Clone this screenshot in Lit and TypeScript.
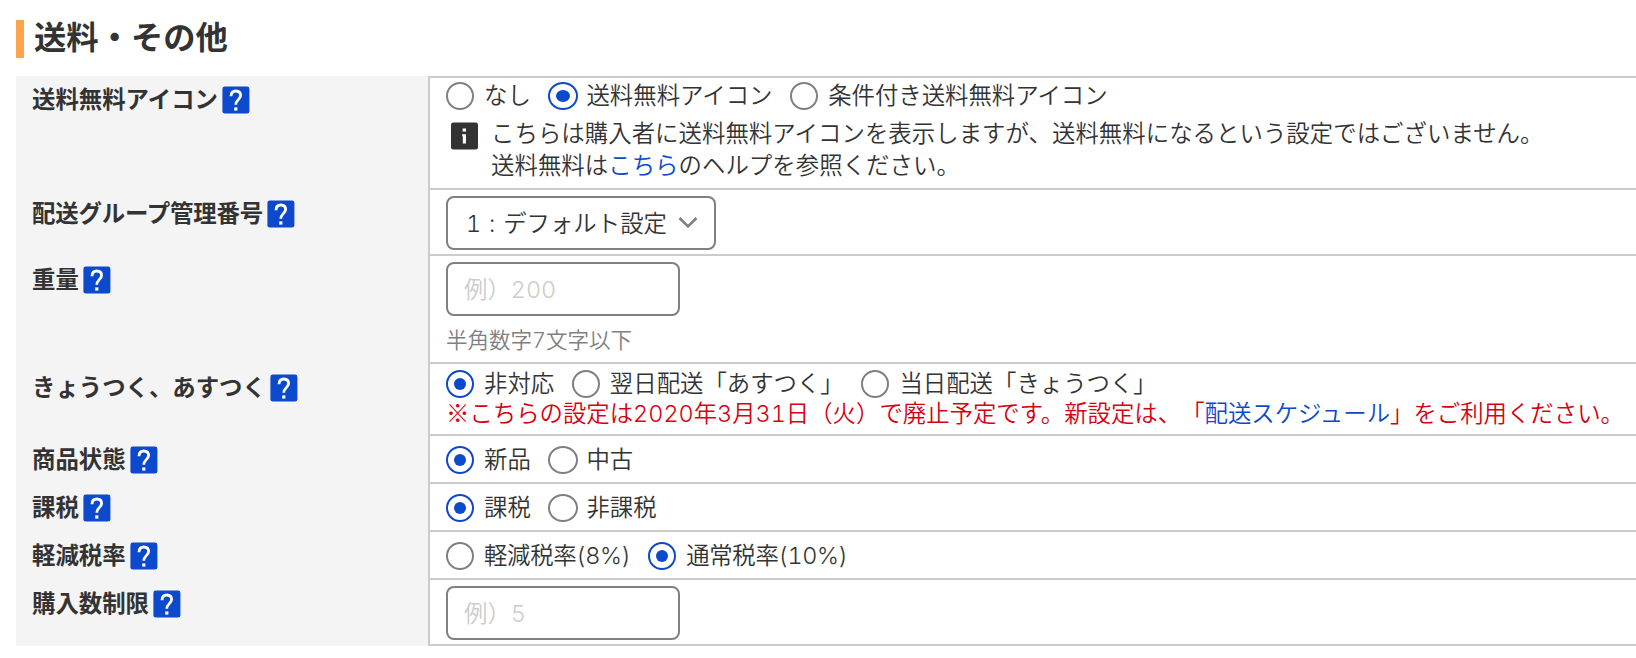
import { LitElement, css, html, nothing } from 'lit';
import { customElement, property } from 'lit/decorators.js';
import { classMap } from 'lit/directives/class-map.js';

interface Option {
  label: string;
  checked?: boolean;
  wide?: boolean;
}

@customElement('help-icon')
export class HelpIcon extends LitElement {
  static styles = css`
    :host {
      display: block;
      width: 28px;
      height: 28px;
    }

    svg {
      display: block;
    }
  `;

  render() {
    return html`
      <svg width="28" height="28" viewBox="0 0 28 28" role="img" aria-label="ヘルプ">
        <rect x="0.4" y="0.6" width="27" height="27" rx="2.4" fill="#0d49cc" />
        <path
          d="M9 10.2C9 6.8 10.9 5 13.8 5S18.6 6.8 18.6 9.6C18.6 13.2 13.8 13.8 13.8 18.8"
          fill="none"
          stroke="#fff"
          stroke-width="2.8"
        />
        <rect x="12.2" y="21.4" width="3.2" height="3.2" fill="#fff" />
      </svg>
    `;
  }
}

@customElement('radio-group')
export class RadioGroup extends LitElement {
  static styles = css`
    :host {
      display: flex;
      gap: 17.7px;
      line-height: 36px;
      white-space: nowrap;
    }

    .option {
      display: flex;
      align-items: center;
      gap: 10px;
    }

    .option.wide {
      gap: 8px;
    }

    .mark {
      box-sizing: border-box;
      display: flex;
      align-items: center;
      justify-content: center;
      width: 28px;
      height: 28px;
      border: 2px solid #808080;
      border-radius: 50%;
      background: #fff;
    }

    .wide .mark {
      width: 30px;
    }

    .mark.checked {
      border-color: #0d49cc;
    }

    .mark.checked::after {
      content: '';
      width: 12px;
      height: 12px;
      border-radius: 50%;
      background: #0d49cc;
    }

    .wide .mark.checked::after {
      width: 14px;
    }
  `;

  @property({ attribute: false }) options: Option[] = [];

  render() {
    return this.options.map(
      (option) => html`
        <label class=${classMap({ option: true, wide: !!option.wide })}>
          <span class=${classMap({ mark: true, checked: !!option.checked })}></span>
          <span>${option.label}</span>
        </label>
      `
    );
  }
}

@customElement('form-row')
export class FormRow extends LitElement {
  static styles = css`
    :host {
      display: flex;
      box-sizing: border-box;
    }

    .head {
      display: flex;
      align-items: flex-start;
      gap: 4px;
      box-sizing: border-box;
      width: 412px;
      flex: none;
      padding: 12px 0 0 16px;
      background: #f4f4f4;
      font-weight: 700;
      line-height: 28px;
      white-space: nowrap;
    }

    :host(.first) .head {
      padding-top: 10px;
    }

    :host(.dense) .head {
      letter-spacing: -0.15px;
    }

    .body {
      flex: 1;
      box-sizing: border-box;
      border-left: 2px solid #ccc;
      border-top: 2px solid #ccc;
      padding-left: 16px;
    }

    :host(.last) .body {
      border-bottom: 2px solid #ccc;
    }
  `;

  @property() label = '';

  render() {
    return html`
      <div class="head"><span>${this.label}</span><help-icon></help-icon></div>
      <div class="body"><slot></slot></div>
    `;
  }
}

@customElement('app-root')
export class AppRoot extends LitElement {
  static styles = css`
    :host {
      display: block;
      box-sizing: border-box;
      height: 658px;
      padding: 20px 0 0 16px;
      overflow: hidden;
      background: #fff;
      color: #333;
      font-family: Inter, 'Noto Sans CJK JP', sans-serif;
      font-size: 23.4px;
      font-weight: 350;
      font-variant-numeric: tabular-nums;
      text-spacing-trim: space-all;
    }

    h2 {
      margin: 0 0 18px;
      padding-left: 10px;
      border-left: 8px solid #ffa44d;
      height: 38px;
      line-height: 35px;
      font-size: 32.3px;
      font-weight: 700;
    }

    .h112 { height: 112px; }
    .h66 { height: 66px; }
    .h108 { height: 108px; }
    .h72 { height: 72px; }
    .h48 { height: 48px; }
    .h68 { height: 68px; }

    .lower {
      padding-top: 2px;
    }

    .centered {
      padding-top: 6px;
    }

    .rates {
      letter-spacing: -0.3px;
    }

    .info {
      display: flex;
      gap: 13px;
      margin: 4px 0 0 5px;
      line-height: 32px;
      letter-spacing: 0.05px;
      white-space: nowrap;
    }

    .info svg {
      margin-top: 4px;
    }

    a {
      color: #0d49cc;
      text-decoration: none;
    }

    .select,
    .input {
      box-sizing: border-box;
      display: flex;
      align-items: center;
      height: 54px;
      margin-top: 6px;
      padding-bottom: 2px;
      border: 2px solid #808080;
      border-radius: 8px;
      background: #fff;
      white-space: pre;
    }

    .select {
      width: 270px;
      justify-content: space-between;
      padding-left: 18px;
      padding-right: 16px;
    }

    .select svg {
      margin-top: 1px;
    }

    .code {
      letter-spacing: 0.8px;
    }

    .input {
      width: 234px;
      padding-left: 16px;
      color: #ccc;
    }

    .hint {
      margin-top: 8px;
      color: #808080;
      font-size: 21.5px;
      line-height: 32px;
    }

    .warning {
      margin-top: -6px;
      color: #d7000f;
      line-height: 32px;
      white-space: nowrap;
    }

    .mark {
      font-family: 'Noto Sans CJK JP', sans-serif;
    }
  `;

  renderField(placeholder: string, hint = '') {
    return html`
      <div class="input">${placeholder}</div>
      ${hint ? html`<div class="hint">${hint}</div>` : nothing}
    `;
  }

  render() {
    return html`
      <h2>送料・その他</h2>
      <form-row class="first h112" label="送料無料アイコン">
        <radio-group
          .options=${[
            { label: 'なし' },
            { label: '送料無料アイコン', checked: true, wide: true },
            { label: '条件付き送料無料アイコン' }
          ]}
        ></radio-group>
        <div class="info">
          <svg width="27" height="29" viewBox="0 0 27 29" aria-hidden="true">
            <rect x="0" y="0.4" width="27" height="27.2" rx="2.4" fill="#333" />
            <path d="M11.6 6.6h3.4v3h-3.4zM11.2 12.2h3.8v9.4h-3.2v-7.4h-0.6z" fill="#fff" />
          </svg>
          <div>
            こちらは購入者に送料無料アイコンを表示しますが、送料無料になるという設定ではございません。<br />
            送料無料は<a>こちら</a>のヘルプを参照ください。
          </div>
        </div>
      </form-row>
      <form-row class="dense h66" label="配送グループ管理番号">
        <div class="select">
          <span><span class="code">1 : </span>デフォルト設定</span>
          <svg width="20" height="14" viewBox="0 0 20 14" aria-hidden="true">
            <path d="M1.5 2L10 10.5L18.5 2" fill="none" stroke="#808080" stroke-width="2.6" />
          </svg>
        </div>
      </form-row>
      <form-row class="h108" label="重量">${this.renderField('例）200', '半角数字7文字以下')}</form-row>
      <form-row class="h72" label="きょうつく、あすつく">
        <radio-group
          class="lower"
          .options=${[
            { label: '非対応', checked: true },
            { label: '翌日配送「あすつく」' },
            { label: '当日配送「きょうつく」' }
          ]}
        ></radio-group>
        <div class="warning"><span class="mark">※</span>こちらの設定は2020年3月31日（火）で廃止予定です。新設定は、「<a>配送スケジュール</a>」をご利用ください。</div>
      </form-row>
      <form-row class="h48" label="商品状態">
        <radio-group
          class="centered"
          .options=${[{ label: '新品', checked: true }, { label: '中古', wide: true }]}
        ></radio-group>
      </form-row>
      <form-row class="h48" label="課税">
        <radio-group
          class="centered"
          .options=${[{ label: '課税', checked: true }, { label: '非課税', wide: true }]}
        ></radio-group>
      </form-row>
      <form-row class="h48" label="軽減税率">
        <radio-group
          class="centered rates"
          .options=${[{ label: '軽減税率(8%)' }, { label: '通常税率(10%)', checked: true }]}
        ></radio-group>
      </form-row>
      <form-row class="last h68" label="購入数制限">${this.renderField('例）5')}</form-row>
    `;
  }
}
